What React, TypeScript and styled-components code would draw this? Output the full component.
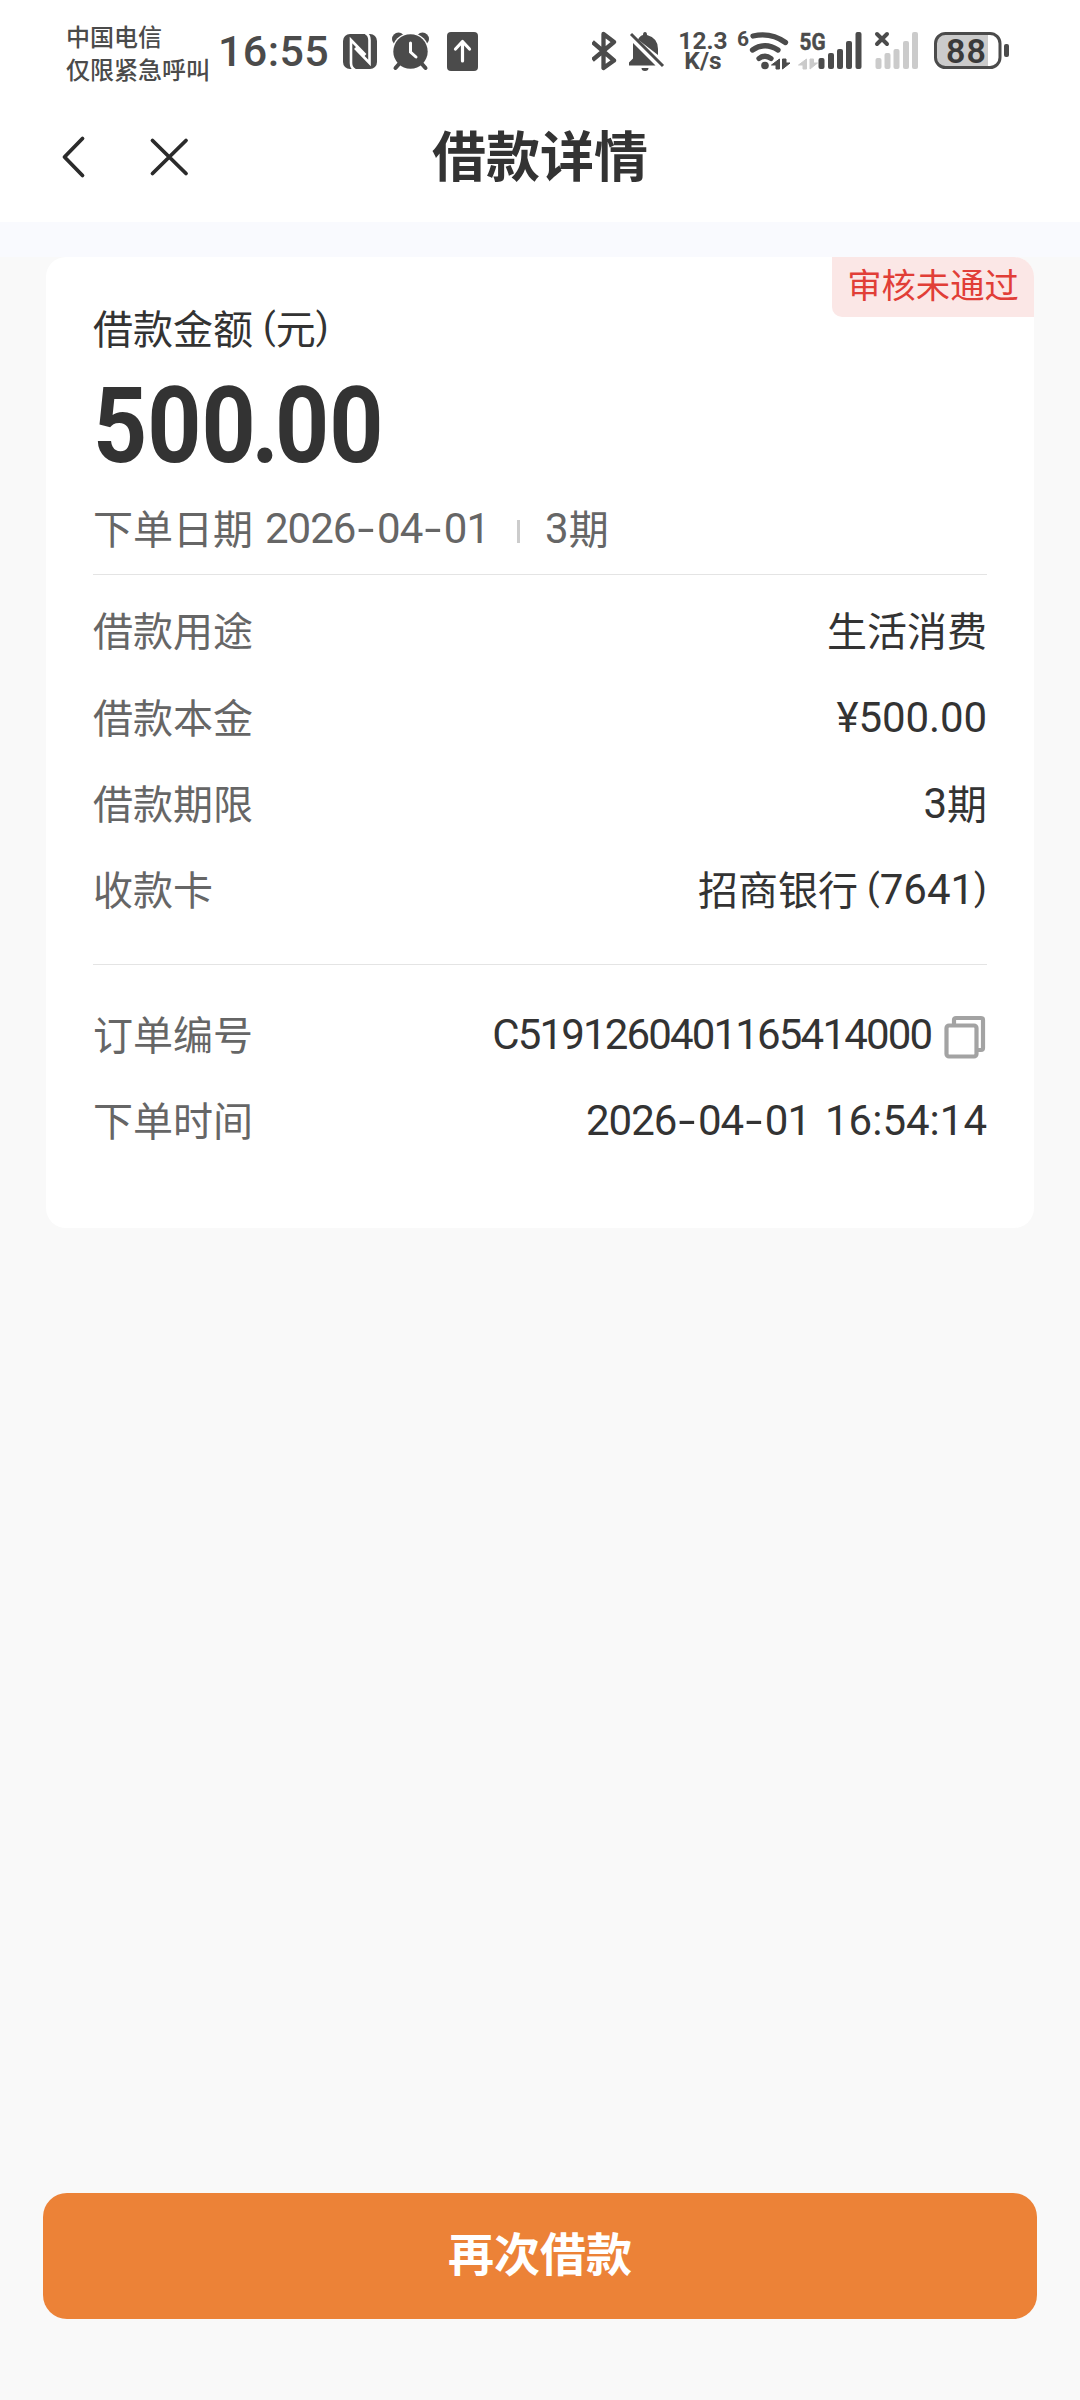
import React from "react";
import styled, { createGlobalStyle } from "styled-components";

const cjk = `"Noto Sans CJK SC", sans-serif`;
const ink = "#4b4b4b";

const Global = createGlobalStyle`
  *, *::before, *::after { box-sizing: border-box; }
  body { margin: 0; background: #f9f9f9; font-family: Roboto, ${cjk}; }
`;

const Page = styled.div`
  width: 1080px;
  height: 2400px;
  display: flex;
  flex-direction: column;
  background: #f9f9f9;
  overflow: hidden;
`;

/* ---------- status bar ---------- */
const StatusBar = styled.div`
  height: 102px;
  background: #fff;
  display: flex;
  justify-content: space-between;
  padding: 0 71px 0 66px;
  color: ${ink};
`;
const StatusGroup = styled.div`
  display: flex;
  align-items: center;
  height: 102px;
`;
const Carrier = styled.div`
  width: 152px;
  padding-top: 1px;
  font: 500 24px/33px ${cjk};
  white-space: nowrap;
`;
const Clock = styled.div`
  width: 125px;
  font: 500 43px/50px Roboto, sans-serif;
  letter-spacing: 0.4px;
`;

const StatusSvg = styled.svg`
  display: block;
  flex: none;
`;

const StatusLeftIcons = () => (
  <StatusSvg width="140" height="102" viewBox="343 0 140 102" fill={ink}>
    <rect x="343" y="34" width="34" height="35" rx="7" />
    <path d="M355 70q-4-2-4-7V40l14.500 15M365.500 33q4 2 4 7v23L355 48" fill="none" stroke="#fff" strokeWidth="2.600" />
    <circle cx="398.500" cy="39" r="6.500" />
    <circle cx="422.500" cy="39" r="6.500" />
    <circle cx="410.500" cy="51.500" r="18.600" fill="#fff" />
    <circle cx="410.500" cy="51.500" r="17.200" />
    <path d="M399 64l-3.500 4M422 64l3.500 4" stroke={ink} strokeWidth="4" strokeLinecap="round" />
    <path d="M410.500 43v9l5.500 5" stroke="#fff" strokeWidth="3" fill="none" strokeLinecap="round" />
    <rect x="447" y="32" width="31" height="39" rx="4" />
    <path d="M462.500 61V42M455.500 49l7-7.500 7 7.500" stroke="#fff" strokeWidth="3.200" fill="none" strokeLinecap="round" strokeLinejoin="round" />
  </StatusSvg>
);

const BluetoothBell = () => (
  <StatusSvg width="82" height="102" viewBox="592 0 82 102" fill={ink}>
    <path d="M592.500 42L614 60.500 603.500 68V34L614 42 592.500 60" fill="none" stroke={ink} strokeWidth="4.300" strokeLinejoin="round" />
    <path d="M633 43L655.500 65.500H629v-3l4-4zM638 39.500q2-4 5-4.500 0-3 2-3t2 3q11 3 11 14v6zM641.500 68h7q0 3-3.500 3t-3.500-3z" />
    <path d="M631 34l32 32" stroke={ink} strokeWidth="3" />
  </StatusSvg>
);

const Speed = styled.div`
  width: 58px;
  font: 700 24.500px/20px Roboto, sans-serif;
  text-align: center;
`;

const Network = () => (
  <StatusSvg width="201" height="102" viewBox="732 0 201 102" fill={ink}>
    <text x="737" y="46" fontFamily="Roboto, sans-serif" fontWeight="700" fontSize="21">6</text>
    <g fill="none" stroke={ink} strokeWidth="5.300" strokeLinecap="round">
      <path d="M753 36Q771 32 785.500 42.500M752.500 50Q765 41.500 778 50M759 58.500q6-4.500 12 0" />
    </g>
    <circle cx="765" cy="65.500" r="3.800" />
    <path d="M779.500 59v10H776v-4h-4.500zM782.500 69V59h3.500v4h4z" stroke={ink} />
    <text x="799.500" y="50" fontFamily="Roboto, sans-serif" fontWeight="700" fontSize="24" textLength="26" lengthAdjust="spacingAndGlyphs" stroke={ink} strokeWidth="0.500">5G</text>
    <path d="M806.500 59v10H803v-4h-4.500zM810 69V59h3.500v4h4z" fill="#cbcbcb" stroke="#cbcbcb" />
    <rect x="818.500" y="58" width="6" height="11" rx="2" />
    <rect x="828" y="53" width="6" height="16" rx="2" />
    <rect x="837" y="49" width="6" height="20" rx="2" />
    <rect x="846" y="41" width="6" height="28" rx="2" />
    <rect x="855.500" y="32" width="6" height="37" rx="2" />
    <path d="M877 34l10 10M887 34l-10 10" stroke={ink} strokeWidth="4" strokeLinecap="round" />
    <g fill="#cbcbcb">
      <rect x="875.500" y="58" width="6" height="11" rx="2" />
      <rect x="884.500" y="53" width="6" height="16" rx="2" />
      <rect x="893.500" y="49" width="6" height="20" rx="2" />
      <rect x="903" y="41" width="6" height="28" rx="2" />
      <rect x="912" y="32" width="6" height="37" rx="2" />
    </g>
  </StatusSvg>
);

const Battery = () => (
  <StatusSvg width="76" height="102" viewBox="933 0 76 102" fill={ink}>
    <path d="M945 33h43v35h-43q-9 0-9-9V42q0-9 9-9z" fill="#cbcbcb" />
    <rect x="935.500" y="33.500" width="64.500" height="34" rx="10" fill="none" stroke={ink} strokeWidth="3" />
    <rect x="1004" y="44" width="5" height="13" rx="2" />
    <text x="946" y="62.500" fontFamily="Roboto, sans-serif" fontWeight="600" fontSize="34" textLength="40" fill="#3a3a3a">88</text>
  </StatusSvg>
);

/* ---------- header ---------- */
const Header = styled.header`
  height: 120px;
  background: #fff;
  display: grid;
  grid-template-columns: 300px 1fr 300px;
  align-items: center;
  padding-bottom: 10px;
`;
const HeaderIcons = styled.div`
  display: flex;
  gap: 60px;
  padding-left: 60px;
`;
const Title = styled.h1`
  margin: 0 0 6px;
  text-align: center;
  color: #333;
  font: 700 54px/70px ${cjk};
`;
const Band = styled.div`
  height: 35px;
  background: #f9fafe;
`;

/* ---------- card ---------- */
const Card = styled.section`
  margin: 0 46px;
  height: 971px;
  background: #fff;
  border-radius: 20px;
  padding: 0 47px;
  overflow: hidden;
  display: flex;
  flex-direction: column;
`;
const Badge = styled.div`
  align-self: flex-end;
  flex: none;
  margin-right: -47px;
  width: 202px;
  height: 60px;
  padding-top: 1px;
  background: #fbe7e6;
  border-bottom-left-radius: 10px;
  color: #e13e37;
  font: 400 34.300px/50px ${cjk};
  text-align: center;
`;
const AmountLabel = styled.div`
  margin-top: -20px;
  height: 60px;
  flex: none;
  color: #333;
  font: 400 40px/60px ${cjk};
  display: flex;
`;
const Amount = styled.div`
  margin-top: 28px;
  height: 84px;
  flex: none;
  color: #333;
  font: 700 105px/84px Roboto, sans-serif;
  transform: scaleX(0.9);
  transform-origin: left;
  white-space: nowrap;
`;
const Dot = styled.span`
  margin: 0 -4.500px;
`;
const Meta = styled.div`
  height: 60px;
  flex: none;
  margin-top: 28px;
  display: flex;
  align-items: center;
  color: #666;
  font: 400 40px/60px ${cjk};
`;
const Separator = styled.i`
  width: 3px;
  height: 23px;
  margin: 9px 25px 0 27px;
  background: #ccc;
`;
const Num = styled.span<{ $ls?: number; $gap?: number }>`
  font-family: Roboto, ${cjk};
  font-size: 42px;
  letter-spacing: ${(p) => p.$ls ?? 0}px;
  margin-top: 4px;
  margin-left: ${(p) => p.$gap ?? 0}px;
  margin-right: ${(p) => -(p.$ls ?? 0)}px;
  white-space: nowrap;
`;
const Paren = styled.span<{ $gap?: number }>`
  font-family: Roboto, ${cjk};
  font-size: 37px;
  margin-left: ${(p) => p.$gap ?? 0}px;
`;
const Dash = styled.span`
  display: inline-block;
  margin: 0 5px;
  letter-spacing: 0;
  transform: scaleX(1.45);
`;
const Divider = styled.div<{ $top: number; $bottom: number }>`
  height: 1px;
  flex: none;
  background: #e4e4e4;
  margin: ${(p) => p.$top}px 0 ${(p) => p.$bottom}px;
`;
const Row = styled.div`
  height: 86.400px;
  flex: none;
  display: flex;
  align-items: center;
  justify-content: space-between;
  font: 400 40px/60px ${cjk};
`;
const Label = styled.span`
  color: #666;
`;
const Value = styled.span`
  display: flex;
  align-items: center;
  height: 60px;
  color: #333;
`;
const CopyIcon = styled.svg`
  margin: 8px 1px 0 11px;
`;

/* ---------- footer ---------- */
const Spacer = styled.div`
  flex: 1;
`;
const Submit = styled.button`
  height: 126px;
  margin: 0 43px 81px;
  padding: 0 0 10px;
  border: 0;
  border-radius: 24px;
  background: #ec8237;
  color: #fff;
  font: 700 46px/60px ${cjk};
`;

const OrderDate = ({ gap }: { gap?: number }) => (
  <Num $gap={gap} $ls={-1}>
    2026<Dash>-</Dash>04<Dash>-</Dash>01
  </Num>
);

export default function App() {
  return (
    <Page>
      <Global />
      <StatusBar>
        <StatusGroup>
          <Carrier>
            <div>中国电信</div>
            <div>仅限紧急呼叫</div>
          </Carrier>
          <Clock>16:55</Clock>
          <StatusLeftIcons />
        </StatusGroup>
        <StatusGroup>
          <BluetoothBell />
          <Speed>
            <div>12.3</div>
            <div>K/s</div>
          </Speed>
          <Network />
          <Battery />
        </StatusGroup>
      </StatusBar>
      <Header>
        <HeaderIcons>
          <svg width="28" height="44" viewBox="60 135 28 44" fill="none" stroke="#2b2b2b" strokeWidth="3.800" strokeLinecap="round" strokeLinejoin="round">
            <path d="M82.500 138.500L64.500 157l18 18.500" />
          </svg>
          <svg width="44" height="44" viewBox="148 135 44 44" fill="none" stroke="#2b2b2b" strokeWidth="3.800" strokeLinecap="round">
            <path d="M152.500 140.500l33.500 33M186 140.500l-33.500 33" />
          </svg>
        </HeaderIcons>
        <Title>借款详情</Title>
      </Header>
      <Band />
      <Card>
        <Badge>审核未通过</Badge>
        <AmountLabel>
          借款金额<Paren $gap={10}>(</Paren>元<Paren>)</Paren>
        </AmountLabel>
        <Amount>500<Dot>.</Dot>00</Amount>
        <Meta>
          下单日期<OrderDate gap={12} />
          <Separator />
          <Num>3</Num>期
        </Meta>
        <Divider $top={17} $bottom={11} />
        <Row>
          <Label>借款用途</Label>
          <Value>生活消费</Value>
        </Row>
        <Row>
          <Label>借款本金</Label>
          <Value><Num $ls={-0.100}>¥500.00</Num></Value>
        </Row>
        <Row>
          <Label>借款期限</Label>
          <Value><Num>3</Num>期</Value>
        </Row>
        <Row>
          <Label>收款卡</Label>
          <Value>招商银行<Paren $gap={9}>(</Paren><Num>7641</Num><Paren>)</Paren></Value>
        </Row>
        <Divider $top={32} $bottom={25} />
        <Row>
          <Label>订单编号</Label>
          <Value>
            <Num $ls={-1.850}>C5191260401165414000</Num>
            <CopyIcon width="42" height="44" viewBox="0 0 42 44" fill="none" stroke="#a3a3a3" strokeWidth="4.200">
              <path d="M10 9V5q0-2 2-2h25q2 0 2 2v28q0 2-2 2h-4" />
              <rect x="2.500" y="10.500" width="30" height="31" rx="2.500" />
            </CopyIcon>
          </Value>
        </Row>
        <Row>
          <Label>下单时间</Label>
          <Value><OrderDate /><Num $gap={14}>16:54:14</Num></Value>
        </Row>
      </Card>
      <Spacer />
      <Submit>再次借款</Submit>
    </Page>
  );
}
